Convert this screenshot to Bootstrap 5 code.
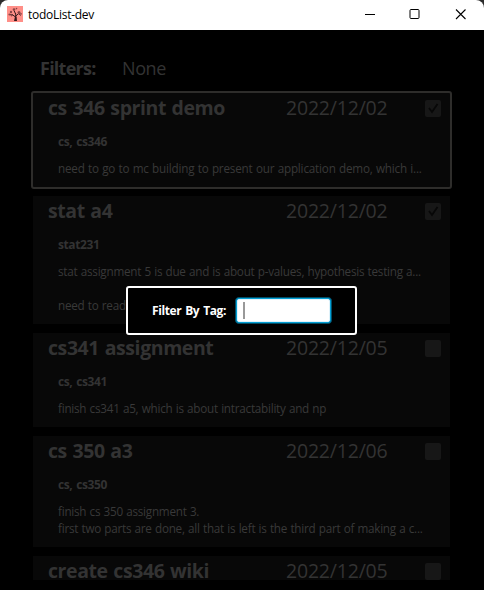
<!DOCTYPE html>
<html lang="en">
<head>
<meta charset="utf-8">
<meta name="viewport" content="width=device-width, initial-scale=1">
<title>todoList-dev</title>
<link href="https://cdn.jsdelivr.net/npm/bootstrap@5.3.0/dist/css/bootstrap.min.css" rel="stylesheet">
<style>
body{background:#2b2b2b;font-family:"Open Sans","Noto Sans",sans-serif;font-size:12px;line-height:17px;color:#333}
.window{width:484px;height:590px;border-radius:8px 8px 0 0;background:#000}
.titlebar{height:30px;background:#fff;color:#000;padding:0 1px 2px 7px}
.app-name{font-size:12px;margin-left:5px;letter-spacing:-.27px}
.win-btn{width:45.5px;height:30px}
.filters{height:61px;padding:8px 0 0 40px;font-size:18px;line-height:61px}
.filters-label{width:82px;letter-spacing:-.75px}
.filters-value{letter-spacing:-.4px}
.tasks{height:489px;padding:2px 34px 0 33px}
.task{background:#080808;width:417px;margin-bottom:9px;padding-bottom:10px}
.task.selected{outline:2px solid #2e2d2b;border-radius:1px}
.task-head{height:30px;padding:0 9px 0 15px;font-size:19.5px;line-height:30px}
.task-title{width:238px;letter-spacing:-.42px;word-spacing:1px}
.task-date{letter-spacing:-.2px}
.check-box{width:16px;height:17px;border-radius:2px;background:#171717;margin-top:7px}
.task-tags{height:37px;padding:10px 0 0 25px;letter-spacing:-.4px;word-spacing:1.2px}
.task-text{padding-left:25px;letter-spacing:-.24px;word-spacing:.5px;white-space:pre;font-size:11.7px;color:#393939}
.task.selected .task-text{letter-spacing:-.19px}
.filter-popup{left:126px;top:286px;width:231px;height:49px;border:2px solid #fff;border-radius:3px;background:#000;color:#fff;padding-left:24px}
.popup-label{width:83px;letter-spacing:-.4px;word-spacing:1.2px}
.tag-input{width:97px;height:27px;border:1px solid #004d66;border-radius:4px;background:#039ed3;padding:1px}
.tag-field{background:#fff;border:1px solid #dff2fa;border-radius:2px;padding:2px 0 3px 5px}
.caret-bar{width:2px;height:17px;background:#999}
</style>
</head>
<body class="overflow-hidden">
<div class="window position-relative overflow-hidden">
  <header class="titlebar d-flex align-items-center">
    <svg width="16" height="16" viewBox="0 0 16 16"><path fill="#ff8f88" d="M0 0h16v16H0z"/><path d="M8.700 15V7.500M8.600 11 5 8.500M8.800 10l3.500-3M8.600 8 7 4.500M5.500 9 2.500 8.500M12 7.500l1.500 2" fill="none" stroke="#35171a"/><path d="M8 10.500h1.500l.5 4.500H7z" fill="#35171a"/><g fill="#8a4546"><circle cx="7" cy="3.500" r="1.300"/><circle cx="9.500" cy="2.600" r=".8"/><circle cx="4" cy="6" r="1.200"/><circle cx="2.500" cy="8.500" r="1.100"/><circle cx="12" cy="6.500" r="1.500"/><circle cx="14" cy="7.800" r=".9"/><circle cx="4.500" cy="9.700" r=".8"/></g></svg>
    <span class="app-name">todoList-dev</span>
    <div class="d-flex ms-auto pt-1">
      <svg class="win-btn" viewBox="0 0 45.500 30"><path d="M18 13.500h10" stroke="#000"/></svg>
      <svg class="win-btn" viewBox="0 0 45.500 30"><rect x="18" y="8.500" width="9" height="9" rx="1" fill="none" stroke="#000"/></svg>
      <svg class="win-btn" viewBox="0 0 45.500 30"><path d="m18 8.500 9.500 9.500m0-9.500L18 18" stroke="#000" stroke-width="1.100"/></svg>
    </div>
  </header>
  <div class="filters d-flex">
    <span class="filters-label fw-bold">Filters:</span><span class="filters-value">None</span>
  </div>
  <main class="tasks overflow-hidden">
    <article class="task selected">
      <div class="task-head d-flex"><span class="task-title fw-bold">cs 346 sprint demo</span><span class="task-date">2022/12/02</span><span class="check-box ms-auto d-flex"><svg width="16" height="17" viewBox="0 0 16 17"><path d="m4 8 3 4 5.500-8" fill="none" stroke="#070707" stroke-width="1.800"/></svg></span></div>
      <div class="task-tags fw-bold">cs, cs346</div>
      <div class="task-text">need to go to mc building to present our application demo, which i...</div>
    </article>
    <article class="task">
      <div class="task-head d-flex"><span class="task-title fw-bold">stat a4</span><span class="task-date">2022/12/02</span><span class="check-box ms-auto d-flex"><svg width="16" height="17" viewBox="0 0 16 17"><path d="m4 8 3 4 5.500-8" fill="none" stroke="#070707" stroke-width="1.800"/></svg></span></div>
      <div class="task-tags fw-bold">stat231</div>
      <div class="task-text">stat assignment 5 is due and is about p-values, hypothesis testing a...

need to read</div>
    </article>
    <article class="task">
      <div class="task-head d-flex"><span class="task-title fw-bold">cs341 assignment</span><span class="task-date">2022/12/05</span><span class="check-box ms-auto"></span></div>
      <div class="task-tags fw-bold">cs, cs341</div>
      <div class="task-text">finish cs341 a5, which is about intractability and np</div>
    </article>
    <article class="task">
      <div class="task-head d-flex"><span class="task-title fw-bold">cs 350 a3</span><span class="task-date">2022/12/06</span><span class="check-box ms-auto"></span></div>
      <div class="task-tags fw-bold">cs, cs350</div>
      <div class="task-text">finish cs 350 assignment 3.
first two parts are done, all that is left is the third part of making a c...</div>
    </article>
    <article class="task">
      <div class="task-head d-flex"><span class="task-title fw-bold">create cs346 wiki</span><span class="task-date">2022/12/05</span><span class="check-box ms-auto"></span></div>
    </article>
  </main>
  <div class="filter-popup position-absolute d-flex align-items-center">
    <span class="popup-label fw-bold">Filter By Tag:</span>
    <div class="tag-input d-flex"><div class="tag-field flex-fill"><div class="caret-bar"></div></div></div>
  </div>
</div>
<script src="https://cdn.jsdelivr.net/npm/bootstrap@5.3.0/dist/js/bootstrap.bundle.min.js"></script>
</body>
</html>
